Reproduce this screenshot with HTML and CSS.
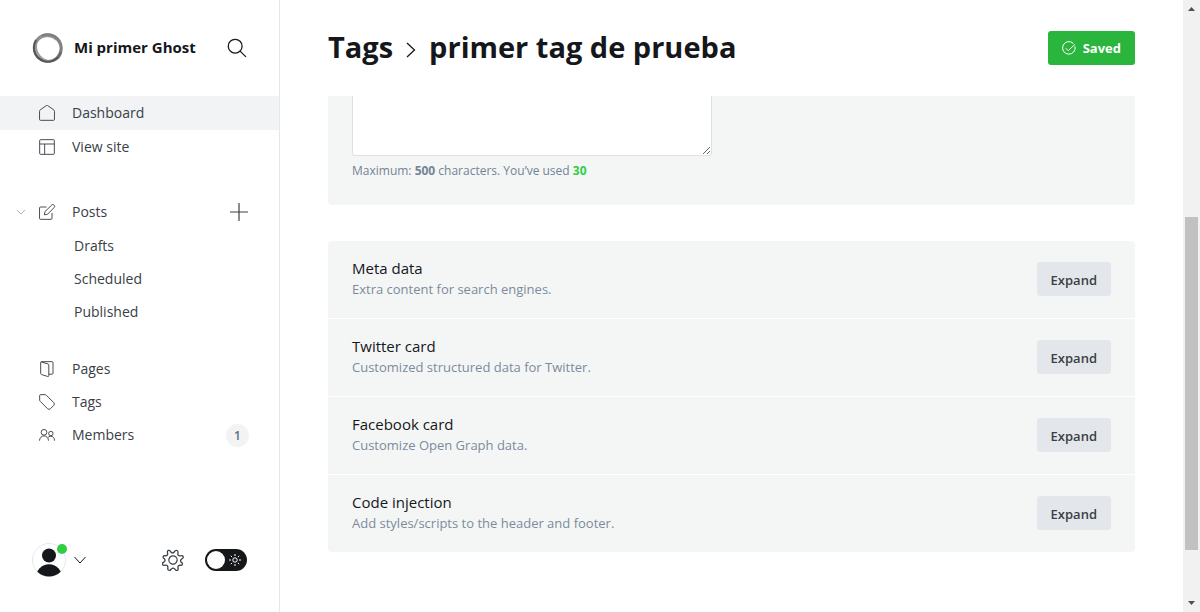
FILE: index.html
```html
<!DOCTYPE html>
<html lang="en">
<head>
<meta charset="utf-8">
<title>Tags - primer tag de prueba</title>
<link rel="stylesheet" href="styles.css">
</head>
<body>
<div class="app">
  <aside class="sidebar">
    <header class="site">
      <svg class="site-logo" viewBox="0 0 32 32" fill="none">
        <ellipse cx="15.600" cy="16" rx="13.600" ry="13.200" stroke="#777" stroke-width="2.400"/>
        <ellipse cx="16.600" cy="15.600" rx="13.600" ry="12" stroke="#999" stroke-width="2" transform="rotate(50 16 16)"/>
        <path d="M4 8C0 15 2 25 10 28.500c8 3.500 17-1 19-9" stroke="#555" stroke-width="2"/>
        <path d="M10 4c7-3 15 0 18 7 2 5 1 10-2 14" stroke="#777" stroke-width="3.400" opacity=".6"/>
        <path d="M5 10c5-7 14-7 19-2" stroke="#888" stroke-width="1.600" opacity=".7"/>
      </svg>
      <span class="site-name">Mi primer Ghost</span>
      <button class="icon-button search" aria-label="Search">
        <svg viewBox="0 0 24 24"><circle cx="9.800" cy="9.800" r="8.300"/><path d="M15.700 15.700 22.700 22.700"/></svg>
      </button>
    </header>
    <nav class="nav">
      <ul class="nav-group">
        <li class="nav-row tall active"><a href="#"><svg viewBox="0 0 24 24"><path d="M.8 9.500v12a1.500 1.500 0 0 0 1.500 1.500h19.400a1.500 1.500 0 0 0 1.500-1.500v-12a3 3 0 0 0-1-2.200L13 .9a1.500 1.500 0 0 0-2 0L1.800 7.300a3 3 0 0 0-1 2.200Z"/></svg><span>Dashboard</span></a></li>
        <li class="nav-row tall"><a href="#"><svg viewBox="0 0 24 24"><rect x="1" y="1" width="22" height="22" rx="1.500"/><path d="M1 7.500h22M8.500 7.500V23"/></svg><span>View site</span></a></li>
      </ul>
      <ul class="nav-group posts">
        <li class="nav-row tall">
          <button class="icon-button collapse" aria-label="Collapse posts"><svg viewBox="0 0 24 24"><path d="m2 7 10 10L22 7"/></svg></button>
          <a href="#"><svg viewBox="0 0 24 24"><path d="M19.500 13.500v8A1.500 1.500 0 0 1 18 23H2.300A1.500 1.500 0 0 1 .8 21.500V6a1.500 1.500 0 0 1 1.500-1.500h9"/><path d="m13 15.300-5 1 1-5L19.300 1.400a2.100 2.100 0 0 1 3 0l.6.6a2.100 2.100 0 0 1 0 3Z"/></svg><span>Posts</span></a>
          <button class="icon-button add" aria-label="New post"><svg viewBox="0 0 18 18"><path d="M9 0v18M0 9h18"/></svg></button>
        </li>
        <li class="nav-row sub"><a href="#"><span>Drafts</span></a></li>
        <li class="nav-row sub"><a href="#"><span>Scheduled</span></a></li>
        <li class="nav-row sub"><a href="#"><span>Published</span></a></li>
      </ul>
      <ul class="nav-group manage">
        <li class="nav-row"><a href="#"><svg viewBox="0 0 24 24"><path d="M2.500 2.200v16.500c0 .8.400 1.300 1.200 1.600l9.300 2.900c1 .3 1.700-.2 1.700-1.200V6c0-.8-.4-1.400-1.200-1.600L3.500 1.500"/><path d="M2.500 2.500A1.500 1.500 0 0 1 4 1h15.500A1.500 1.500 0 0 1 21 2.500v15.800a1.500 1.500 0 0 1-1.500 1.500h-4.800"/></svg><span>Pages</span></a></li>
        <li class="nav-row"><a href="#"><svg viewBox="0 0 24 24"><path d="M1 9V2.500A1.500 1.500 0 0 1 2.500 1H9c.8 0 1.600.3 2.100.9l11 11a3 3 0 0 1 0 4.200l-5 5a3 3 0 0 1-4.200 0l-11-11A3 3 0 0 1 1 9Z"/></svg><span>Tags</span></a></li>
        <li class="nav-row tall"><a href="#"><svg viewBox="0 0 24 24"><circle cx="7.500" cy="8" r="4.300"/><path d="M.8 20.500a6.700 7.200 0 0 1 13.400 0"/><circle cx="17.800" cy="9.800" r="3.300"/><path d="M13.800 15.300a5.700 5.700 0 0 1 9.400 5.200"/></svg><span>Members</span></a><span class="count">1</span></li>
      </ul>
    </nav>
    <footer class="sidebar-footer">
      <button class="account" aria-label="Account menu">
        <span class="avatar">
          <svg viewBox="0 0 34 34"><defs><clipPath id="avatar-clip"><circle cx="17" cy="17" r="16.500"/></clipPath></defs><circle class="avatar-edge" cx="17" cy="17" r="16.500"/><g clip-path="url(#avatar-clip)"><circle cx="17" cy="12.500" r="7"/><circle cx="17" cy="34.500" r="13.200"/></g></svg>
          <span class="status"></span>
        </span>
        <svg class="chevron" viewBox="0 0 12 12"><path d="m.5 3 5.500 6 5.500-6"/></svg>
      </button>
      <a class="settings" href="#" aria-label="Settings"><svg viewBox="0 0 24 24"><g transform="rotate(22.500 12 12)"><circle cx="12" cy="12" r="4.500"/><path d="M13.700 2l.6 1.800a2 2 0 0 0 2.800 1.200l1.700-.9a1.600 1.600 0 0 1 2.200 2.200L20 8a2 2 0 0 0 1.200 2.800l1 .3a1.600 1.600 0 0 1 0 3l-1 .3A2 2 0 0 0 20 17.200l.9 1.600a1.600 1.600 0 0 1-2.200 2.200l-1.600-.9a2 2 0 0 0-2.800 1.200l-.6 1.100a1.700 1.700 0 0 1-3.400 0l-.6-1.100a2 2 0 0 0-2.800-1.200l-1.600.9a1.600 1.600 0 0 1-2.200-2.200l.9-1.600a2 2 0 0 0-1.200-2.800l-1-.3a1.600 1.600 0 0 1 0-3l1-.3A2 2 0 0 0 4 8l-.9-1.700a1.600 1.600 0 0 1 2.200-2.200l1.600.9a2 2 0 0 0 2.800-1.200L10.300 2a1.800 1.800 0 0 1 3.400 0Z"/></g></svg></a>
      <label class="theme">
        <input type="checkbox" aria-label="Night mode">
        <span class="knob"></span>
        <svg viewBox="0 0 12 12"><circle cx="6" cy="6" r="2.200"/><path d="M6 0v2M6 10v2M0 6h2M10 6h2M1.800 1.800l1.300 1.300M8.900 8.900l1.300 1.300M10.200 1.800 8.900 3.100M3.100 8.900l-1.300 1.300"/></svg>
      </label>
    </footer>
  </aside>

  <main class="main">
    <header class="page-header">
      <h1 class="title"><a href="#">Tags</a><svg viewBox="0 0 10 16"><path d="m1 1 7.500 7L1 15"/></svg><span>primer tag de prueba</span></h1>
      <button class="save"><svg viewBox="0 0 14 14"><path d="M13 5.400A6.300 6.300 0 1 1 11.400 2.500"/><path d="m3.700 7.200 2.500 2.500 6.700-6.300"/></svg>Saved</button>
    </header>
    <section class="panel description">
      <textarea aria-label="Description"></textarea>
      <p class="hint">Maximum: <b>500</b> characters. You’ve used <b class="used">30</b></p>
    </section>
    <section class="panel settings-list">
      <div class="setting"><div><h2>Meta data</h2><p>Extra content for search engines.</p></div><button class="expand">Expand</button></div>
      <div class="setting"><div><h2>Twitter card</h2><p>Customized structured data for Twitter.</p></div><button class="expand">Expand</button></div>
      <div class="setting"><div><h2>Facebook card</h2><p>Customize Open Graph data.</p></div><button class="expand">Expand</button></div>
      <div class="setting"><div><h2>Code injection</h2><p>Add styles/scripts to the header and footer.</p></div><button class="expand">Expand</button></div>
    </section>
  </main>

  <div class="scrollbar" aria-hidden="true">
    <svg viewBox="0 0 17 17"><path d="M5 11h7L8.500 7Z"/></svg>
    <div class="track"><div class="thumb"></div></div>
    <svg viewBox="0 0 17 17"><path d="M5 6h7l-3.500 4Z"/></svg>
  </div>
</div>
</body>
</html>
```
FILE: styles.css
```css
* { box-sizing: border-box; }

body {
  margin: 0;
  font-family: "Open Sans", "Noto Sans", sans-serif;
  font-size: 14px;
  color: #15171a;
  background: #fff;
}

h1, h2, p, ul { margin: 0; padding: 0; }
ul { list-style: none; }
a { color: inherit; text-decoration: none; }
button { font: inherit; color: inherit; border: 0; padding: 0; background: none; cursor: pointer; }
svg { display: block; fill: none; stroke: currentColor; flex: none; }

.app { display: flex; min-height: 100vh; }

/* Sidebar */
.sidebar {
  display: flex;
  flex-direction: column;
  flex: 0 0 280px;
  border-right: 1px solid #e5e8ea;
}

.site { display: flex; align-items: center; height: 96px; padding: 0 32px; }
.site-logo { width: 32px; height: 32px; margin-right: 10px; }
.site-name { padding-bottom: 2px; font-weight: 700; font-size: 15px; white-space: nowrap; }
.search { margin-left: auto; }
.search svg { width: 20px; height: 20px; stroke-width: 1.5; }

.nav-row { position: relative; display: flex; align-items: center; height: 33px; padding: 0 31px 0 38px; color: #394047; }
.nav-row.tall { height: 34px; }
.nav-row.active { background: #f1f3f5; }
.nav-row a { display: flex; align-items: center; flex: 1; gap: 16px; }
.nav-row a span { padding-bottom: 1px; }
.nav-row a svg { width: 18px; height: 16px; stroke-width: 1.4; }
.nav-row.sub { padding-left: 74px; }
.posts { margin-top: 31px; }
.manage { margin-top: 24px; }
.collapse { position: absolute; left: 16px; color: #abb4be; }
.collapse svg { width: 10px; height: 10px; stroke-width: 2.4; }
.add svg { width: 18px; height: 18px; stroke-width: 1.2; }
.count {
  min-width: 23px;
  margin-right: -1px;
  border-radius: 12px;
  background: #f1f3f5;
  color: #626d79;
  font-size: 12px;
  font-weight: 600;
  line-height: 23px;
  text-align: center;
}

.sidebar-footer { display: flex; align-items: center; margin-top: auto; padding: 0 32px 35px; }
.account { display: flex; align-items: center; gap: 8px; margin-right: auto; }
.avatar { position: relative; }
.avatar svg { width: 34px; height: 34px; fill: #15171a; stroke: none; }
.avatar .avatar-edge { fill: #fff; stroke: #e5e8ea; }
.status { position: absolute; top: 1px; right: -1px; width: 10px; height: 10px; border-radius: 50%; background: #30cf43; }
.chevron { width: 12px; height: 12px; }
.settings { margin-right: 21px; color: #394047; }
.settings svg { width: 22px; height: 22px; stroke-width: 1.4; }
.theme { position: relative; display: flex; align-items: center; justify-content: space-between; width: 42px; height: 22px; padding: 0 6px 0 2px; border-radius: 11px; background: #15171a; color: #fff; }
.theme input { position: absolute; inset: 0; margin: 0; opacity: 0; }
.knob { width: 18px; height: 18px; border-radius: 50%; background: #fff; }
.theme svg { width: 12px; height: 12px; }

/* Tag editor */
.main { flex: 1; min-width: 0; padding: 0 48px; }
.page-header { display: flex; align-items: center; justify-content: space-between; height: 96px; }
.title { display: flex; align-items: center; padding-bottom: 2px; font-size: 29px; line-height: 40px; font-weight: 700; }
.title svg { width: 10px; height: 16px; margin: 6px 13px 0; stroke-width: 1.3; }
.save {
  display: flex;
  align-items: center;
  gap: 7px;
  height: 34px;
  padding: 0 14px;
  border-radius: 3px;
  background: #2ab53c;
  color: #fff;
  font-size: 13px;
  font-weight: 700;
}
.save svg { width: 14px; height: 14px; }

.panel { border-radius: 4px; background: #f4f6f6; }
.description { min-height: 109px; padding: 0 24px 24px; border-top-left-radius: 0; border-top-right-radius: 0; }
.description textarea {
  display: block;
  width: 360px;
  max-width: 100%;
  height: 60px;
  border: 1px solid #dde1e5;
  border-top: 0;
  border-radius: 0 0 3px 3px;
  background: #fff;
  resize: vertical;
}
.hint { padding-top: 5px; font-size: 12px; line-height: 20px; color: #738393; }
.hint .used { color: #30cf43; }

.settings-list { margin-top: 36px; }
.setting { display: flex; align-items: flex-start; justify-content: space-between; padding: 17px 24px 19px; }
.setting + .setting { border-top: 1px solid #fff; }
.setting h2 { font-size: 15px; line-height: 21px; font-weight: 500; }
.setting p { font-size: 13px; line-height: 20px; color: #7c8b9a; }
.expand { height: 34px; margin-top: 4px; padding: 2px 14px 0; border-radius: 3px; background: #e3e7eb; color: #394047; font-size: 13px; font-weight: 600; }

/* Scroll bar */
.scrollbar { display: flex; flex-direction: column; flex: 0 0 17px; background: #f1f1f1; }
.scrollbar svg { width: 17px; height: 17px; fill: #505050; stroke: none; }
.track { display: flex; flex: 1; flex-direction: column; padding: 0 2px; }
.track::before { content: ""; flex: 200; }
.track::after { content: ""; flex: 45; }
.thumb { flex: 333; background: #c1c1c1; }
```
